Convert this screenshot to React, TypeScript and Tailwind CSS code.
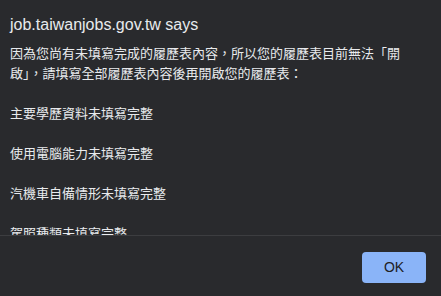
import React from "react";

const items = [
  "主要學歷資料未填寫完整",
  "使用電腦能力未填寫完整",
  "汽機車自備情形未填寫完整",
  "駕照種類未填寫完整",
];

export default function App() {
  return (
    <div
      className="w-[441px] h-[296px] bg-[#292a2d] flex flex-col overflow-hidden"
      style={{ fontFamily: '"Liberation Sans", "Noto Sans CJK TC", sans-serif' }}
    >
      <div className="pl-[10px] pr-4 pt-[15px] text-[16px] leading-[20px] text-[#e8eaed]">
        job.taiwanjobs.gov.tw says
      </div>
      <div className="mt-[9px] h-[191px] overflow-hidden pl-[10px] pr-4 text-[13px] leading-[20px] text-[#e8eaed]">
        <p>
          因為您尚有未填寫完成的履歷表內容，所以您的履歷表目前無法「開啟」，請填寫全部履歷表內容後再開啟您的履歷表：
        </p>
        {items.map((t) => (
          <p key={t} className="mt-[20px]">
            {t}
          </p>
        ))}
      </div>
      <div className="h-px bg-[#3c3d40]" />
      <div className="flex justify-end pr-[15px] pt-[16px]">
        <button className="w-[64px] h-[31px] rounded-[4px] bg-[#8ab4f8] text-[#202124] text-[14px] flex items-center justify-center">
          OK
        </button>
      </div>
    </div>
  );
}
